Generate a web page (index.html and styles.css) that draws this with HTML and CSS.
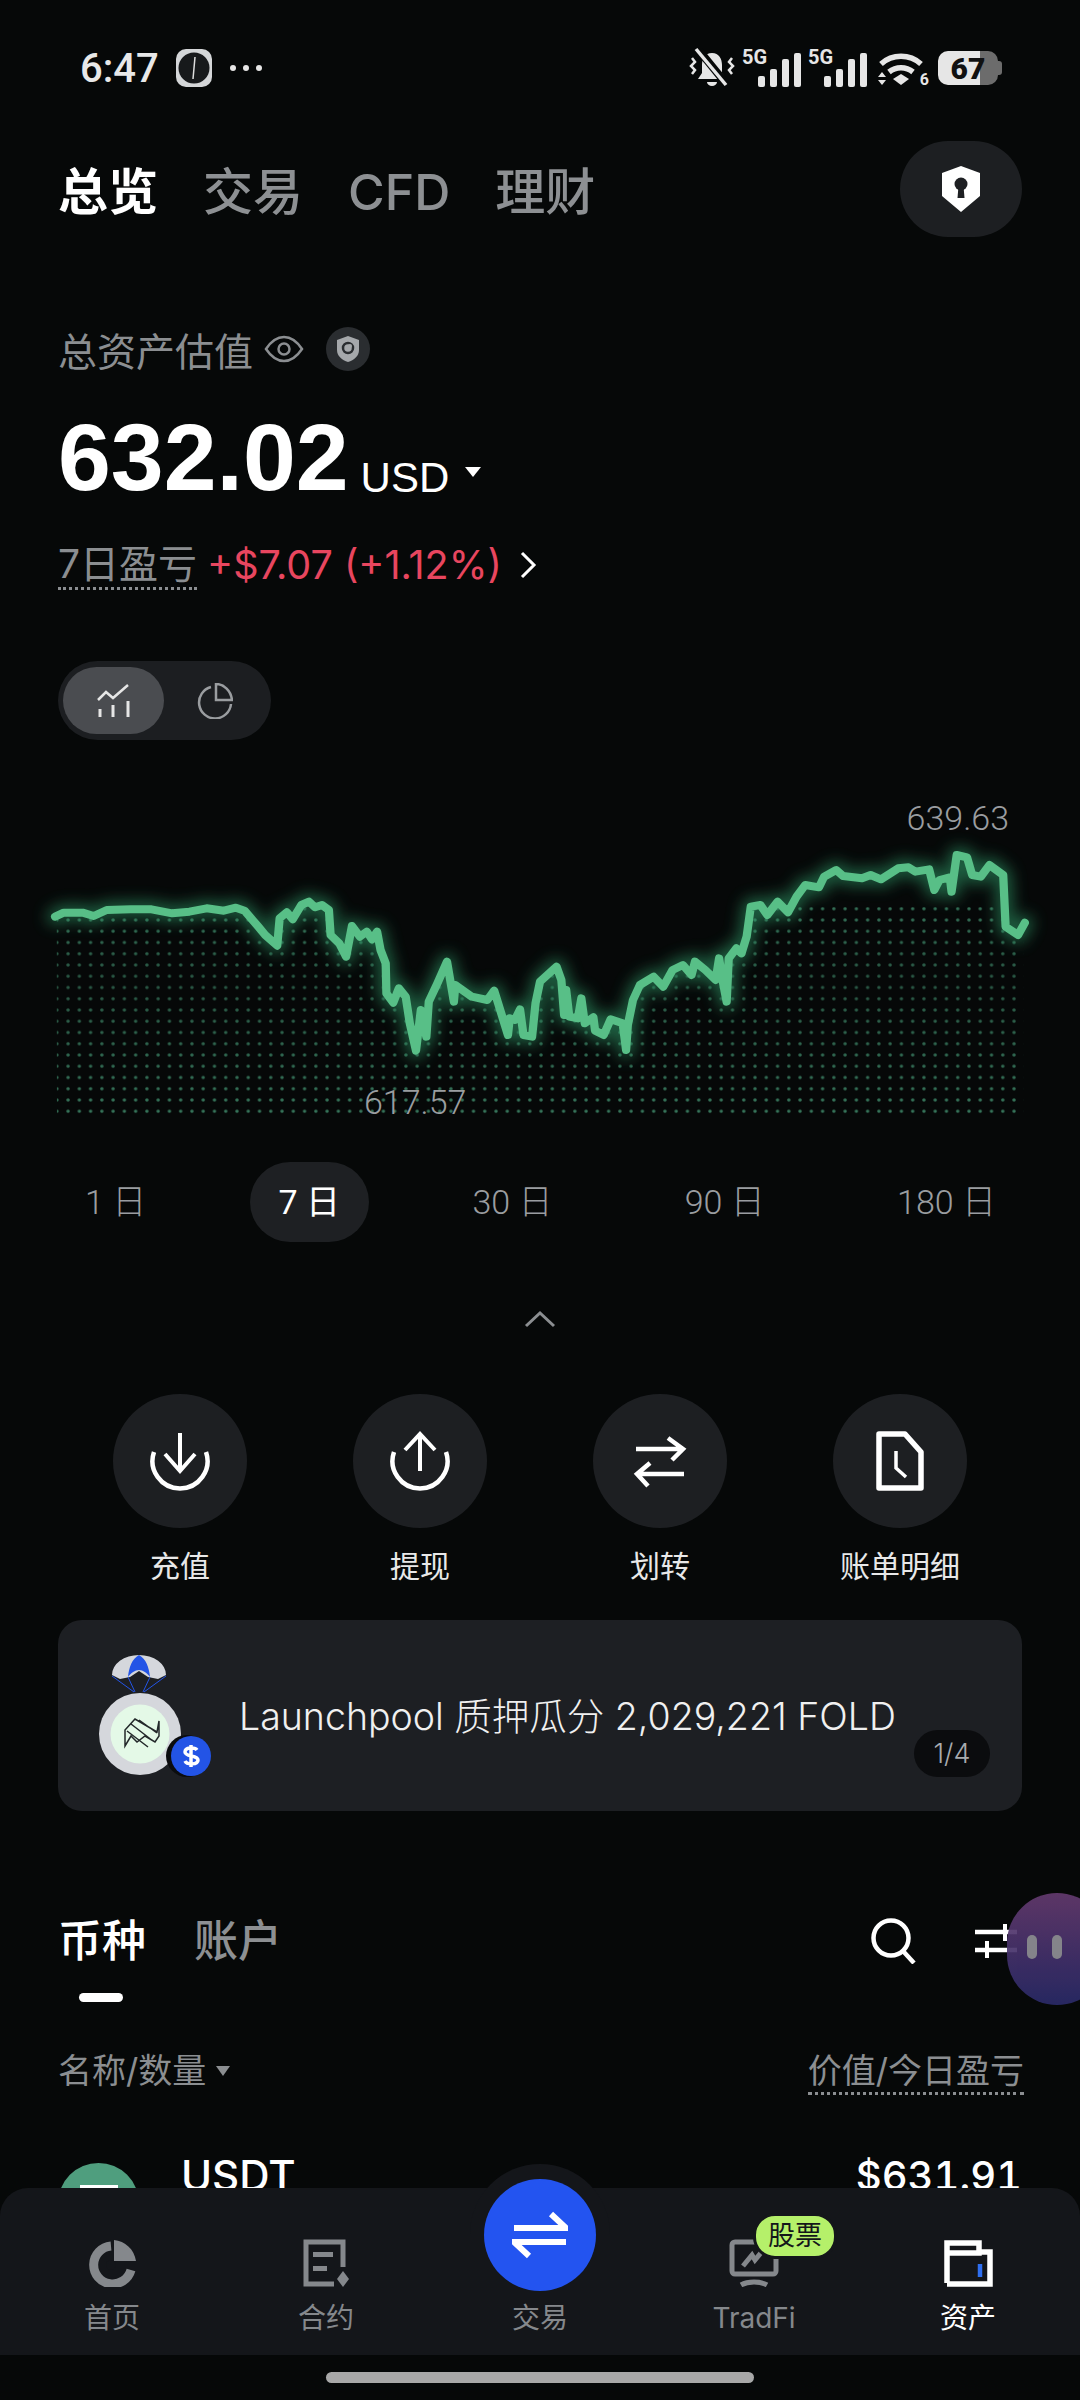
FILE: index.html
```html
<!DOCTYPE html>
<html lang="zh-CN">
<head>
    <meta charset="UTF-8">
    <meta name="viewport" content="width=device-width, initial-scale=1.0">
    <title>资产</title>
    <link rel="stylesheet" href="styles.css">
</head>
<body>
<div class="app">
    <div class="status">
        <div class="status-left">
            <span class="time">6:47</span>
            <svg class="clock" width="38" height="38" viewBox="0 0 38 38"><rect x="1" y="0" width="36" height="38" rx="10" fill="#d4d6d8"/><circle cx="19" cy="19" r="15.500" fill="#17191b"/><path d="M19 19l1-11M19 19l-1 11" stroke="#ddd" stroke-width="1.500" fill="none"/></svg>
            <span class="more"><i></i><i></i><i></i></span>
        </div>
        <div class="status-right">
            <svg width="46" height="42" viewBox="0 0 46 42"><path d="M23 6c-7 0-10 6-10 12v8l-4 6h28l-4-6v-8c0-6-3-12-10-12zM18 35a5 4 0 0 0 10 0z" fill="#e6e6e6"/><path d="M8 1l31 38" stroke="#060808" stroke-width="8"/><path d="M7 2l30 36" stroke="#e6e6e6" stroke-width="3.500"/><path d="M3 11l3 4-4 4 4 4-3 4M43 11l-3 4 4 4-4 4 3 4" stroke="#e6e6e6" stroke-width="2.500" fill="none"/></svg>
            <div class="signal"><span class="net">5G</span><svg width="43" height="34" viewBox="0 0 43 34"><rect x="0" y="23" width="7" height="11" rx="2"/><rect x="12" y="16" width="7" height="18" rx="2"/><rect x="24" y="6" width="7" height="28" rx="2"/><rect x="36" y="0" width="7" height="34" rx="2"/></svg></div>
            <div class="signal"><span class="net">5G</span><svg width="43" height="34" viewBox="0 0 43 34"><rect x="0" y="23" width="7" height="11" rx="2"/><rect x="12" y="16" width="7" height="18" rx="2"/><rect x="24" y="6" width="7" height="28" rx="2"/><rect x="36" y="0" width="7" height="34" rx="2"/></svg></div>
            <div class="wifi">
                <svg width="47" height="36" viewBox="0 0 47 36"><path d="M3 14a30 30 0 0 1 40 0M11 22a19 19 0 0 1 24 0" stroke="#e6e6e6" stroke-width="5.500" fill="none"/><path d="M15 29l8-5 8 5-8 6z" fill="#e6e6e6"/><path d="M0 27l4-5 4 5zM0 30l4 5 4-5z" fill="#e6e6e6"/></svg>
                <span class="wifi-num">6</span>
            </div>
            <div class="battery"><span class="battery-num">67</span></div>
        </div>
    </div>

    <div class="top-tabs">
        <div class="top-tab-list">
            <span class="top-tab active">总览</span>
            <span class="top-tab">交易</span>
            <span class="top-tab">CFD</span>
            <span class="top-tab">理财</span>
        </div>
        <div class="lock-btn">
            <svg width="40" height="46" viewBox="0 0 40 46"><path d="M20 0l19 7v23l-19 16L1 30V7z" fill="#fff"/><circle cx="20" cy="18" r="6.500" fill="#1d1f22"/><path d="M17.500 20h5l1 12h-7z" fill="#1d1f22"/></svg>
        </div>
    </div>

    <div class="summary">
        <div class="summary-label">
            <span>总资产估值</span>
            <svg class="eye" width="40" height="28" viewBox="0 0 40 28"><path d="M2 14C8 5 14 2 20 2s12 3 18 12c-6 9-12 12-18 12S8 23 2 14z" fill="none" stroke="#8b8e91" stroke-width="2.500"/><circle cx="20" cy="14" r="5.500" fill="none" stroke="#8b8e91" stroke-width="2.500"/></svg>
            <span class="guard">
                <svg width="24" height="28" viewBox="0 0 24 28"><path d="M12 1l11 4v10c0 6-5 10-11 12C6 25 1 21 1 15V5z" fill="#a5a8ab"/><circle cx="12" cy="13" r="5" fill="none" stroke="#2a2d30" stroke-width="2.500"/><circle cx="14" cy="11" r="2" fill="#a5a8ab"/></svg>
            </span>
        </div>
        <div class="amount">
            <span class="amount-num">632.02</span>
            <span class="amount-unit">USD</span>
            <span class="caret-big"></span>
        </div>
        <div class="pnl">
            <span class="pnl-label">7日盈亏</span>
            <span class="pnl-value">+$7.07 (+1.12%)</span>
            <svg width="17" height="28" viewBox="0 0 17 28"><path d="M2 2l12 12L2 26" fill="none" stroke="#fff" stroke-width="3"/></svg>
        </div>
        <div class="toggle">
            <span class="toggle-item active">
                <svg width="34" height="34" viewBox="0 0 34 34"><path d="M1 16l8-8 7 6L31 1" fill="none" stroke="#e6e6e6" stroke-width="2.500"/><path d="M3 25v8M16 21v12M31 17v16" stroke="#e6e6e6" stroke-width="3"/></svg>
            </span>
            <span class="toggle-item">
                <svg width="36" height="36" viewBox="0 0 36 36"><path d="M14 4a16 16 0 1 0 20 17" fill="none" stroke="#9a9da0" stroke-width="2.500"/><path d="M19 1c8 0 15 7 16 16H19z" fill="none" stroke="#9a9da0" stroke-width="2.500"/></svg>
            </span>
        </div>
    </div>

    <div class="chart">
        <svg class="chart-svg" width="1080" height="360" viewBox="0 0 3136 1080" preserveAspectRatio="none">
            <defs>
                <pattern id="dots" x="165" y="420" width="32.7" height="33.75" patternUnits="userSpaceOnUse">
                    <circle cx="0" cy="0" r="5" fill="#3f8a6a"/>
                    <circle cx="32.7" cy="0" r="5" fill="#3f8a6a"/>
                    <circle cx="0" cy="33.75" r="5" fill="#3f8a6a"/>
                    <circle cx="32.7" cy="33.75" r="5" fill="#3f8a6a"/>
                </pattern>
                <clipPath id="under">
                    <polygon points="160,410 185,398 240,398 272,408 310,390 380,388 440,388 500,400 550,395 600,385 650,392 685,383 710,392 750,440 770,465 805,497 812,415 833,397 850,418 875,375 897,365 915,382 935,375 955,390 960,465 985,490 1005,530 1022,438 1045,470 1065,455 1080,478 1095,455 1105,510 1120,550 1122,640 1142,668 1158,625 1178,650 1190,730 1208,812 1222,690 1238,770 1245,665 1270,610 1298,545 1318,665 1322,615 1370,650 1415,660 1435,632 1475,765 1480,715 1495,720 1510,688 1520,765 1545,770 1555,670 1568,605 1616,560 1630,600 1638,705 1644,630 1653,710 1678,715 1688,655 1698,730 1723,712 1728,752 1753,765 1773,718 1808,730 1818,810 1823,735 1838,660 1858,615 1898,590 1926,620 1953,570 1983,555 2008,585 2018,545 2048,570 2078,600 2088,535 2098,600 2110,665 2116,535 2138,505 2153,520 2168,470 2180,380 2208,375 2228,405 2258,365 2288,397 2313,350 2338,315 2378,322 2393,290 2428,270 2448,288 2503,295 2528,285 2558,298 2608,265 2638,262 2658,275 2698,268 2713,330 2728,300 2758,292 2763,335 2778,225 2808,232 2823,285 2848,290 2873,255 2913,285 2920,440 2956,465 2972,428 2972,1010 165,1010"/>
                </clipPath>
                <linearGradient id="dotFade" x1="0" y1="0" x2="0" y2="1">
                    <stop offset="0" stop-color="#fff" stop-opacity=".8"/>
                    <stop offset=".35" stop-color="#fff" stop-opacity=".6"/>
                    <stop offset="1" stop-color="#fff" stop-opacity=".85"/>
                </linearGradient>
                <mask id="fadeMask" maskUnits="userSpaceOnUse" x="0" y="0" width="3136" height="1080"><rect x="0" y="380" width="3136" height="640" fill="url(#dotFade)"/></mask>
                <filter id="glow" filterUnits="userSpaceOnUse" x="0" y="0" width="3136" height="1080"><feGaussianBlur stdDeviation="22"/></filter>
                <polyline id="line" points="160,410 185,398 240,398 272,408 310,390 380,388 440,388 500,400 550,395 600,385 650,392 685,383 710,392 750,440 770,465 805,497 812,415 833,397 850,418 875,375 897,365 915,382 935,375 955,390 960,465 985,490 1005,530 1022,438 1045,470 1065,455 1080,478 1095,455 1105,510 1120,550 1122,640 1142,668 1158,625 1178,650 1190,730 1208,812 1222,690 1238,770 1245,665 1270,610 1298,545 1318,665 1322,615 1370,650 1415,660 1435,632 1475,765 1480,715 1495,720 1510,688 1520,765 1545,770 1555,670 1568,605 1616,560 1630,600 1638,705 1644,630 1653,710 1678,715 1688,655 1698,730 1723,712 1728,752 1753,765 1773,718 1808,730 1818,810 1823,735 1838,660 1858,615 1898,590 1926,620 1953,570 1983,555 2008,585 2018,545 2048,570 2078,600 2088,535 2098,600 2110,665 2116,535 2138,505 2153,520 2168,470 2180,380 2208,375 2228,405 2258,365 2288,397 2313,350 2338,315 2378,322 2393,290 2428,270 2448,288 2503,295 2528,285 2558,298 2608,265 2638,262 2658,275 2698,268 2713,330 2728,300 2758,292 2763,335 2778,225 2808,232 2823,285 2848,290 2873,255 2913,285 2920,440 2956,465 2976,428" fill="none" stroke-linejoin="round" stroke-linecap="round"/>
            </defs>
            <g mask="url(#fadeMask)"><rect x="165" y="380" width="2807" height="640" fill="url(#dots)" clip-path="url(#under)"/></g>
            <use href="#line" stroke="#2f9a68" stroke-width="48" opacity=".6" filter="url(#glow)"/>
            <use href="#line" stroke="#58bf87" stroke-width="24"/>
        </svg>
        <span class="chart-val chart-max">639.63</span>
        <span class="chart-val chart-min">617.57</span>
    </div>

    <div class="ranges">
        <span class="range">1 日</span>
        <span class="range active">7 日</span>
        <span class="range">30 日</span>
        <span class="range">90 日</span>
        <span class="range">180 日</span>
    </div>

    <div class="collapse">
        <svg width="32" height="18" viewBox="0 0 32 18"><path d="M2 16L16 3l14 13" fill="none" stroke="#8b8e91" stroke-width="3"/></svg>
    </div>

    <div class="actions">
        <div class="action">
            <span class="action-icon"><svg width="60" height="60" viewBox="0 0 60 60"><path d="M4 21A27.500 27.500 0 1 0 56 21" fill="none" stroke="#fff" stroke-width="4.500"/><path d="M30 2v38M15 23l15 17 15-17" fill="none" stroke="#fff" stroke-width="4"/></svg></span>
            <span class="action-name">充值</span>
        </div>
        <div class="action">
            <span class="action-icon"><svg width="60" height="60" viewBox="0 0 60 60"><path d="M4 21A27.500 27.500 0 1 0 56 21" fill="none" stroke="#fff" stroke-width="4.500"/><path d="M30 40V3M15 19L30 3l15 16" fill="none" stroke="#fff" stroke-width="4"/></svg></span>
            <span class="action-name">提现</span>
        </div>
        <div class="action">
            <span class="action-icon"><svg width="60" height="60" viewBox="0 0 60 60"><path d="M6 18h47M38 7l15 11-11 11" fill="none" stroke="#fff" stroke-width="4.500"/><path d="M54 43H7M20 32L7 43l11 12" fill="none" stroke="#fff" stroke-width="4.500"/></svg></span>
            <span class="action-name">划转</span>
        </div>
        <div class="action">
            <span class="action-icon"><svg width="60" height="60" viewBox="0 0 60 60"><path d="M9 3h26l16 18v36H9z" fill="none" stroke="#fff" stroke-width="5.500" stroke-linejoin="round"/><path d="M26 20v17l10 9" fill="none" stroke="#fff" stroke-width="3.500"/></svg></span>
            <span class="action-name">账单明细</span>
        </div>
    </div>

    <div class="banner">
        <svg class="banner-icon" width="124" height="144" viewBox="0 0 124 144">
            <path d="M16 36a27 20 0 0 1 54 0l-8 4-10-2-9-6-9 6-10 2z" fill="#d5d7dc"/>
            <path d="M43 16c-7 4-10 12-11 22 3-4 7-7 11-7s8 3 11 7c-1-10-4-18-11-22z" fill="#2354e6"/>
            <path d="M16 37l22 16M32 38l7 15M70 37L48 53M54 38l-7 15" stroke="#2354e6" stroke-width="1" fill="none"/>
            <circle cx="44" cy="95" r="41" fill="#d5d7dc"/>
            <circle cx="44" cy="95" r="29.500" fill="#e4f9e7"/>
            <path d="M29 107V91l10-11 22 13 2-11v15l-4 6-10-6-8 6-6-6zM35 85l22 17M31 92l21 16M43 81l18 13" fill="none" stroke="#23282a" stroke-width="1.500"/>
            <circle cx="91" cy="117" r="21" fill="#0b0c0e"/>
            <circle cx="95" cy="117" r="20" fill="#2354e6"/>
            <path d="M101 111c-2-3-12-3-12 2 0 5 13 3 13 8 0 5-11 5-13 1M95 106v22" fill="none" stroke="#fff" stroke-width="3.500"/>
        </svg>
        <span class="banner-text">Launchpool 质押瓜分 2,029,221 FOLD</span>
        <span class="page-tag">1/4</span>
    </div>

    <div class="list-tabs">
        <div class="list-tab-group">
            <span class="list-tab active">币种</span>
            <span class="list-tab">账户</span>
        </div>
        <div class="list-tools">
            <svg width="46" height="46" viewBox="0 0 46 46"><circle cx="20" cy="20" r="17.500" fill="none" stroke="#fff" stroke-width="4.500"/><path d="M32 33l11 12" stroke="#fff" stroke-width="4.500"/></svg>
            <svg width="42" height="34" viewBox="0 0 42 34"><path d="M0 8h42M0 26h42" stroke="#fff" stroke-width="4.500"/><path d="M30 0v17M12 17v17" stroke="#fff" stroke-width="4"/></svg>
        </div>
    </div>

    <div class="list-head">
        <span class="sort">名称/数量<i class="caret-small"></i></span>
        <span class="value-head">价值/今日盈亏</span>
    </div>

    <div class="coin-row">
        <span class="coin-logo"><i></i></span>
        <span class="coin-name">USDT</span>
        <span class="coin-value">$631.91</span>
    </div>
</div>

<div class="float-pill"><i></i><i></i></div>

<div class="nav">
    <div class="nav-item">
        <svg width="50" height="48" viewBox="0 0 50 48"><path d="M24 7a19 19 0 1 0 20 24" fill="none" stroke="#85888c" stroke-width="9"/><path d="M27 1c11 1 20 9 22 21H27z" fill="#85888c"/><circle cx="24" cy="26" r="5" fill="#14161a"/></svg>
        <span class="nav-label">首页</span>
    </div>
    <div class="nav-item">
        <svg width="50" height="48" viewBox="0 0 50 48"><path d="M33 45H5V3h37v25" fill="none" stroke="#85888c" stroke-width="5"/><path d="M12 13h20v5H12zM12 27h14v5H12z" fill="#85888c"/><path d="M42 32l6 8-6 8-6-8z" fill="#85888c"/></svg>
        <span class="nav-label">合约</span>
    </div>
    <div class="nav-item nav-trade">
        <span class="trade-bump"></span>
        <span class="trade-btn"><svg width="56" height="48" viewBox="0 0 56 48"><path d="M2 17h52L39 3M54 31H2l15 14" fill="none" stroke="#fff" stroke-width="6"/></svg></span>
        <span class="nav-label">交易</span>
    </div>
    <div class="nav-item">
        <svg width="50" height="48" viewBox="0 0 50 48"><rect x="3" y="3" width="44" height="32" rx="3" fill="none" stroke="#85888c" stroke-width="5"/><path d="M14 27l9-11 3 5 9-11" fill="none" stroke="#85888c" stroke-width="5"/><path d="M12 46c7-4 19-4 26 0" fill="none" stroke="#85888c" stroke-width="5"/></svg>
        <span class="nav-label">TradFi</span>
        <span class="nav-badge">股票</span>
    </div>
    <div class="nav-item active">
        <svg width="50" height="48" viewBox="0 0 50 48"><path d="M4 44V4h32v10H4M36 13h11v32H4" fill="none" stroke="#fff" stroke-width="5.500"/><path d="M37 25v13" stroke="#2f6ff0" stroke-width="4.500"/></svg>
        <span class="nav-label">资产</span>
    </div>
</div>
<div class="home-bar"></div>
</body>
</html>
```
FILE: styles.css
```css
* {
    box-sizing: border-box;
}

html, body {
    margin: 0;
    padding: 0;
    background-color: #060808;
}

body {
    position: relative;
    width: 1080px;
    height: 2400px;
    overflow: hidden;
    font-family: 'Inter', 'Noto Sans CJK SC', sans-serif;
    color: #fff;
}

.status {
    height: 136px;
    padding: 0 82px 0 80px;
    display: flex;
    align-items: center;
    justify-content: space-between;
}

.status-left,
.status-right {
    display: flex;
    align-items: center;
}

.time {
    font-family: 'Roboto', sans-serif;
    font-size: 40px;
    font-weight: 500;
    color: #e8e8e8;
}

.clock {
    margin-left: 16px;
}

.more {
    display: flex;
    gap: 7px;
    margin-left: 17px;
}

.more i {
    width: 6px;
    height: 6px;
    border-radius: 50%;
    background-color: #e6e6e6;
}

.status-right {
    gap: 7px;
}

.signal {
    position: relative;
    width: 59px;
    height: 38px;
    display: flex;
    justify-content: flex-end;
    align-items: flex-end;
    fill: #e6e6e6;
}

.net {
    position: absolute;
    left: 0;
    top: 0;
    font-family: 'Roboto', sans-serif;
    font-size: 20px;
    line-height: 16px;
    font-weight: 700;
    color: #e6e6e6;
}

.wifi {
    position: relative;
    width: 47px;
    height: 36px;
    margin-left: 4px;
}

.wifi svg {
    display: block;
}

.wifi-num {
    position: absolute;
    right: -4px;
    bottom: -2px;
    font-family: 'Roboto', sans-serif;
    font-size: 16px;
    line-height: 16px;
    font-weight: 700;
    color: #e6e6e6;
}

.battery {
    position: relative;
    width: 60px;
    height: 34px;
    margin-left: 6px;
    border-radius: 10px;
    background: linear-gradient(to right, #e6e6e6 70%, #6c6c6c 70%);
    display: flex;
    align-items: center;
    justify-content: center;
}

.battery::after {
    content: "";
    position: absolute;
    right: -4px;
    top: 10px;
    width: 4px;
    height: 14px;
    border-radius: 0 3px 3px 0;
    background-color: #6c6c6c;
}

.battery-num {
    font-family: 'Roboto', sans-serif;
    font-size: 30px;
    font-weight: 900;
    color: #111;
}

.top-tabs {
    margin-top: 5px;
    padding: 0 58px;
    display: flex;
    align-items: center;
    justify-content: space-between;
}

.top-tab-list {
    display: flex;
    gap: 45px;
    padding-top: 5px;
}

.top-tab {
    font-size: 50px;
    line-height: 60px;
    font-weight: 500;
    color: #8d9093;
}

.top-tab.active {
    color: #fff;
    font-weight: 700;
}

.lock-btn {
    width: 122px;
    height: 96px;
    border-radius: 48px;
    background-color: #1d1f22;
    display: flex;
    align-items: center;
    justify-content: center;
}

.summary {
    padding: 90px 58px 0;
}

.summary-label {
    display: flex;
    align-items: center;
    height: 44px;
    font-size: 39px;
    color: #8b8e91;
}

.eye {
    margin-left: 11px;
}

.guard {
    width: 44px;
    height: 44px;
    margin-left: 22px;
    border-radius: 50%;
    background-color: #2a2d30;
    display: flex;
    align-items: center;
    justify-content: center;
}

.amount {
    margin-top: 41px;
    height: 90px;
    display: flex;
    align-items: baseline;
    line-height: 90px;
}

.amount-num {
    font-family: 'Liberation Sans', sans-serif;
    font-size: 95px;
    font-weight: 700;
}

.amount-unit {
    margin-left: 12px;
    font-family: 'Liberation Sans', sans-serif;
    font-size: 42px;
    position: relative;
    top: 2px;
}

.caret-big {
    width: 0;
    height: 0;
    margin-left: 16px;
    border-left: 8px solid transparent;
    border-right: 8px solid transparent;
    border-top: 10px solid #fff;
    align-self: center;
    margin-top: 30px;
}

.pnl {
    margin-top: 38px;
    height: 50px;
    display: flex;
    align-items: center;
}

.pnl-label {
    font-size: 39px;
    line-height: 46px;
    color: #8b8e91;
    border-bottom: 3px dotted #8b8e91;
}

.pnl-value {
    margin-left: 10px;
    margin-right: 18px;
    font-size: 39.5px;
    font-weight: 400;
    color: #e8465f;
}

.toggle {
    margin-top: 71px;
    width: 213px;
    height: 79px;
    padding: 6px 5px;
    border-radius: 40px;
    background-color: #1c1e21;
    display: flex;
}

.toggle-item {
    width: 101px;
    border-radius: 34px;
    display: flex;
    align-items: center;
    justify-content: center;
}

.toggle-item.active {
    background-color: #4a4c50;
}

.chart {
    position: relative;
    margin-top: 40px;
    height: 360px;
}

.chart-svg {
    display: block;
}

.chart-val {
    position: absolute;
    font-family: 'Roboto', sans-serif;
    font-size: 34px;
    line-height: 40px;
    font-weight: 300;
    color: #9a9da0;
}

.chart-max {
    right: 71px;
    top: 18px;
}

.chart-min {
    left: 364px;
    top: 302px;
}

.ranges {
    margin-top: 22px;
    padding: 0 55px 0 56px;
    display: flex;
    justify-content: space-between;
}

.range {
    height: 80px;
    padding: 0 29px;
    border-radius: 40px;
    font-family: 'Roboto', 'Noto Sans CJK SC', sans-serif;
    font-size: 34px;
    line-height: 80px;
    font-weight: 300;
    color: #9a9da0;
}

.range.active {
    background-color: #1e2023;
    color: #fff;
    font-weight: 400;
}

.collapse {
    margin-top: 68px;
    height: 22px;
    display: flex;
    justify-content: center;
}

.actions {
    margin-top: 62px;
    padding: 0 60px;
    display: grid;
    grid-template-columns: repeat(4, 1fr);
}

.action {
    display: flex;
    flex-direction: column;
    align-items: center;
}

.action-icon {
    width: 134px;
    height: 134px;
    border-radius: 50%;
    background-color: #1d1f22;
    display: flex;
    align-items: center;
    justify-content: center;
}

.action-name {
    margin-top: 18px;
    font-size: 30px;
    line-height: 40px;
    color: #e8e8e8;
}

.banner {
    position: relative;
    margin: 34px 58px 0;
    height: 191px;
    padding-left: 38px;
    border-radius: 24px;
    background-color: #1d1f23;
    display: flex;
    align-items: flex-start;
}

.banner-icon {
    flex: none;
    margin-top: 19px;
}

.banner-text {
    margin-left: 19px;
    margin-top: 72px;
    font-size: 37.5px;
    line-height: 50px;
    font-weight: 300;
    white-space: nowrap;
    color: #f0f0f0;
}

.page-tag {
    position: absolute;
    right: 32px;
    bottom: 34px;
    width: 76px;
    height: 47px;
    border-radius: 24px;
    background-color: #0b0c0e;
    font-size: 27px;
    line-height: 47px;
    font-weight: 300;
    text-align: center;
    color: #a8abae;
}

.list-tabs {
    margin-top: 100px;
    padding: 0 63px 0 58px;
    display: flex;
    justify-content: space-between;
    align-items: flex-start;
}

.list-tab-group {
    display: flex;
    gap: 48px;
}

.list-tab {
    position: relative;
    font-size: 44px;
    line-height: 60px;
    font-weight: 500;
    color: #8d9093;
}

.list-tab.active {
    color: #fff;
}

.list-tab.active::after {
    content: "";
    position: absolute;
    left: 21px;
    top: 82px;
    width: 44px;
    height: 9px;
    border-radius: 5px;
    background-color: #fff;
}

.list-tools {
    display: flex;
    align-items: center;
    gap: 58px;
    height: 60px;
}

.list-head {
    margin-top: 79px;
    padding: 0 56px 0 58px;
    display: flex;
    justify-content: space-between;
    align-items: flex-start;
    font-size: 34px;
    line-height: 42px;
    color: #8b8e91;
}

.sort {
    display: flex;
    align-items: center;
}

.caret-small {
    width: 0;
    height: 0;
    margin-left: 10px;
    border-left: 7px solid transparent;
    border-right: 7px solid transparent;
    border-top: 10px solid #8b8e91;
}

.value-head {
    border-bottom: 3px dotted #8b8e91;
}

.coin-row {
    margin-top: 54px;
    padding: 0 58px;
    display: flex;
    align-items: flex-start;
}

.coin-logo {
    width: 81px;
    height: 81px;
    margin: 14px 42px 0 0;
    border-radius: 50%;
    background-color: #4f9e7e;
    display: flex;
    justify-content: center;
}

.coin-logo i {
    width: 38px;
    height: 10px;
    margin-top: 22px;
    background-color: #fff;
}

.coin-name,
.coin-value {
    font-size: 42px;
    line-height: 54px;
    font-weight: 500;
}

.coin-value {
    margin-left: auto;
    font-size: 40px;
    font-variant-numeric: tabular-nums;
}

.float-pill {
    position: absolute;
    left: 1007px;
    top: 1893px;
    width: 100px;
    height: 112px;
    padding: 42px 0 0 20px;
    border-radius: 50px;
    background: linear-gradient(to bottom, #643a6e, #2a2a68);
    opacity: 0.92;
    display: flex;
    gap: 15px;
}

.float-pill i {
    width: 10px;
    height: 24px;
    border-radius: 5px;
    background-color: #8f8f96;
}

.nav {
    position: absolute;
    left: 0;
    top: 2188px;
    width: 1080px;
    height: 167px;
    padding: 0 5px;
    border-radius: 28px 28px 0 0;
    background-color: #14161a;
    display: flex;
}

.nav-item {
    position: relative;
    flex: 1;
    padding-top: 51px;
    display: flex;
    flex-direction: column;
    align-items: center;
    font-size: 28px;
    line-height: 38px;
    color: #85888c;
}

.nav-item svg {
    display: block;
}

.nav-label {
    margin-top: 12px;
    position: relative;
}

.nav-item.active {
    color: #fff;
}

.nav-trade {
    padding-top: 99px;
}

.trade-bump {
    position: absolute;
    left: 50%;
    top: -24px;
    width: 140px;
    height: 100px;
    margin-left: -70px;
    border-radius: 70px 70px 0 0;
    background-color: #14161a;
}

.trade-btn {
    position: absolute;
    left: 50%;
    top: -9px;
    width: 112px;
    height: 112px;
    margin-left: -56px;
    border-radius: 50%;
    background-color: #2354f0;
    display: flex;
    align-items: center;
    justify-content: center;
}

.nav-badge {
    position: absolute;
    left: 106px;
    top: 25px;
    width: 84px;
    height: 46px;
    border: 3px solid #14161a;
    border-radius: 22px;
    background-color: #b5f06a;
    font-size: 27px;
    line-height: 39px;
    text-align: center;
    color: #14161a;
}

.home-bar {
    position: absolute;
    left: 326px;
    top: 2372px;
    width: 428px;
    height: 11px;
    border-radius: 6px;
    background-color: #a8a8a8;
}

body::after {
    content: "";
    position: absolute;
    left: 0;
    top: 2355px;
    width: 1080px;
    height: 45px;
    background-color: #000;
    z-index: -1;
}
```
